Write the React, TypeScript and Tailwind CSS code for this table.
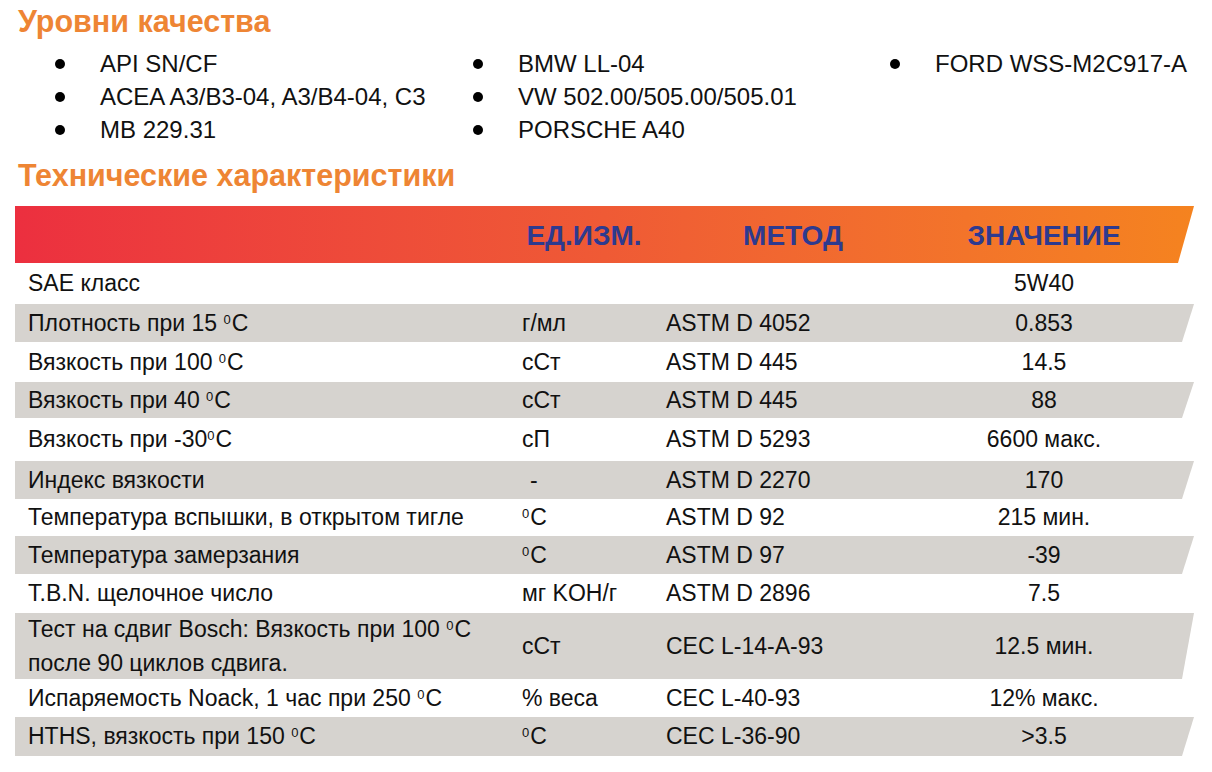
import React from 'react'

// quality levels, three columns
const levels = [
  ['API SN/CF', 'ACEA A3/B3-04, A3/B4-04, C3', 'MB 229.31'],
  ['BMW LL-04', 'VW 502.00/505.00/505.01', 'PORSCHE A40'],
  ['FORD WSS-M2C917-A'],
]

type Row = {
  name: React.ReactNode
  unit?: React.ReactNode
  method?: string
  value: string
  h: string
  gray?: boolean
}

// degree mark as a raised zero
const Deg = () => (
  <>
    <sup className="text-[13px] -top-[7px] mr-[1px]">0</sup>C
  </>
)

const rows: Row[] = [
  { name: 'SAE класс', value: '5W40', h: 'h-[41px]' },
  { name: <>Плотность при 15 <Deg /></>, unit: 'г/мл', method: 'ASTM D 4052', value: '0.853', h: 'h-[38px]', gray: true },
  { name: <>Вязкость при 100 <Deg /></>, unit: 'сСт', method: 'ASTM D 445', value: '14.5', h: 'h-[40px]' },
  { name: <>Вязкость при 40 <Deg /></>, unit: 'сСт', method: 'ASTM D 445', value: '88', h: 'h-[36px]', gray: true },
  { name: <>Вязкость при -30<Deg /></>, unit: 'сП', method: 'ASTM D 5293', value: '6600 макс.', h: 'h-[43px]' },
  { name: 'Индекс вязкости', unit: <span className="pl-2">-</span>, method: 'ASTM D 2270', value: '170', h: 'h-[38px]', gray: true },
  { name: 'Температура вспышки, в открытом тигле', unit: <Deg />, method: 'ASTM D 92', value: '215 мин.', h: 'h-[37px]' },
  { name: 'Температура замерзания', unit: <Deg />, method: 'ASTM D 97', value: '-39', h: 'h-[38px]', gray: true },
  { name: 'T.B.N. щелочное число', unit: 'мг KOH/г', method: 'ASTM D 2896', value: '7.5', h: 'h-[39px]' },
  {
    name: (
      <span className="leading-[33px]">
        Тест на сдвиг Bosch: Вязкость при 100 <Deg />
        <br />
        после 90 циклов сдвига.
      </span>
    ),
    unit: 'сСт',
    method: 'CEC L-14-A-93',
    value: '12.5 мин.',
    h: 'h-[66px]',
    gray: true,
  },
  { name: <>Испаряемость Noack, 1 час при 250 <Deg /></>, unit: '% веса', method: 'CEC L-40-93', value: '12% макс.', h: 'h-[38px]' },
  { name: <>HTHS, вязкость при 150 <Deg /></>, unit: <Deg />, method: 'CEC L-36-90', value: '>3.5', h: 'h-[39px]', gray: true },
]

const App = () => {
  return (
    <div className="w-[1212px] h-[772px] bg-white text-[#111] font-['Liberation_Sans',Arial,sans-serif] overflow-hidden">
      {/* title */}
      <h2 className="pl-[18px] pt-[4px] text-[30.5px] leading-[34px] font-bold text-[#ee8534]">Уровни качества</h2>

      {/* quality bullets */}
      <div className="flex mt-[9px] text-[24px] leading-[33px]">
        {levels.map((col, i) => (
          <ul key={i} className={i === 0 ? 'w-[473px] pl-[55px]' : i === 1 ? 'w-[417px]' : 'flex-1'}>
            {col.map((t) => (
              <li key={t} className="flex items-center">
                <span className="w-[10px] h-[10px] rounded-full bg-black mr-[35px] shrink-0" />
                <span>{t}</span>
              </li>
            ))}
          </ul>
        ))}
      </div>

      <h2 className="pl-[18px] mt-[12px] text-[30.5px] leading-[34px] font-bold text-[#ee8534]">Технические характеристики</h2>

      {/* table */}
      <div className="mt-[14px] ml-[15px] w-[1179px]">
        <div className="h-[57px] flex items-center bg-gradient-to-r from-[#ec2f3f] via-[#ef5a35] to-[#f5831f] [clip-path:polygon(0_0,100%_0,calc(100%-16px)_100%,0_100%)] text-[28px] font-bold text-[#2d3a8f] pt-[2px]">
          <div className="w-[492px]" />
          <div className="w-[154px] text-center">ЕД.ИЗМ.</div>
          <div className="w-[264px] text-center">МЕТОД</div>
          <div className="w-[238px] text-center">ЗНАЧЕНИЕ</div>
        </div>
        {rows.map((r, i) => (
          <div
            key={i}
            className={`${r.h} flex items-center text-[23px] ${r.gray ? 'bg-[#d6d3cf]' : ''} [clip-path:polygon(0_0,100%_0,calc(100%-12px)_100%,0_100%)]`}
          >
            <div className="w-[492px] pl-[13px]">{r.name}</div>
            <div className="w-[159px] pl-[15px]">{r.unit}</div>
            <div className="w-[263px]">{r.method}</div>
            <div className="w-[230px] text-center">{r.value}</div>
          </div>
        ))}
      </div>
    </div>
  )
}

export default App
